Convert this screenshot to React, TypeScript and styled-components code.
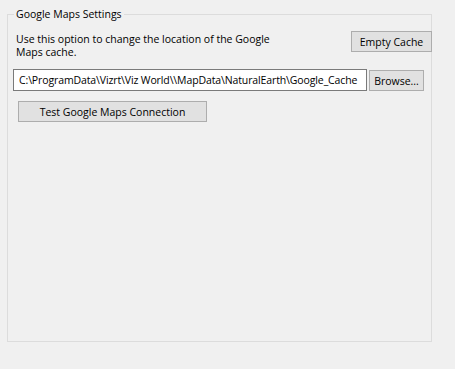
import React from 'react';
import styled, { createGlobalStyle } from 'styled-components';

const GlobalStyle = createGlobalStyle`
  html, body {
    margin: 0;
    padding: 0;
    background: #f0f0f0;
  }
  body {
    font-family: 'Segoe UI', 'Open Sans', 'Noto Sans', sans-serif;
    font-size: 10.5px;
    color: #000;
  }
`;

const Page = styled('div')`
  width: 455px;
  height: 369px;
  padding: 7px 0 0 7px;
  box-sizing: border-box;
`;

const GroupBox = styled('fieldset')`
  box-sizing: border-box;
  width: 425px;
  height: 335px;
  margin: 0;
  padding: 0;
  border: 1px solid #dcdcdc;
  display: flex;
  flex-direction: column;
`;

const Legend = styled('legend')`
  margin-left: 6px;
  padding: 0 2px;
  line-height: 14px;
`;

const TopRow = styled('div')`
  display: flex;
  justify-content: space-between;
  align-items: flex-start;
  margin-top: 10px;
  margin-right: -1px;
`;

const Description = styled('p')`
  margin: 2px 0 0 8px;
  width: 262px;
  line-height: 13px;
`;

const Button = styled('button')<{ $width: number }>`
  box-sizing: border-box;
  width: ${(p) => p.$width}px;
  height: 21px;
  padding: 0;
  margin: 0;
  background: #e1e1e1;
  border: 1px solid #adadad;
  border-radius: 0;
  font-family: inherit;
  font-size: inherit;
  color: #000;
`;

const PathRow = styled('div')`
  display: flex;
  align-items: flex-start;
  gap: 2px;
  margin: 10px 0 0 5px;
`;

const PathInput = styled('input')`
  box-sizing: border-box;
  width: 354px;
  height: 22px;
  margin: 0;
  padding: 0 0 0 5px;
  border: 1px solid #7a7a7a;
  background: #fff;
  font-family: inherit;
  font-size: inherit;
  letter-spacing: -0.12px;
  color: #000;
  outline: none;
`;

const BrowseButton = styled(Button)`
  margin-top: 1px;
`;

const TestRow = styled('div')`
  margin: 10px 0 0 10px;
`;

export default function App() {
  return (
    <>
      <GlobalStyle />
      <Page>
        <GroupBox>
          <Legend>Google Maps Settings</Legend>
          <TopRow>
            <Description>
              Use this option to change the location of the Google Maps cache.
            </Description>
            <Button $width={81}>Empty Cache</Button>
          </TopRow>
          <PathRow>
            <PathInput
              readOnly
              value="C:\ProgramData\Vizrt\Viz World\\MapData\NaturalEarth\Google_Cache"
            />
            <BrowseButton $width={55}>Browse...</BrowseButton>
          </PathRow>
          <TestRow>
            <Button $width={189}>Test Google Maps Connection</Button>
          </TestRow>
        </GroupBox>
      </Page>
    </>
  );
}
